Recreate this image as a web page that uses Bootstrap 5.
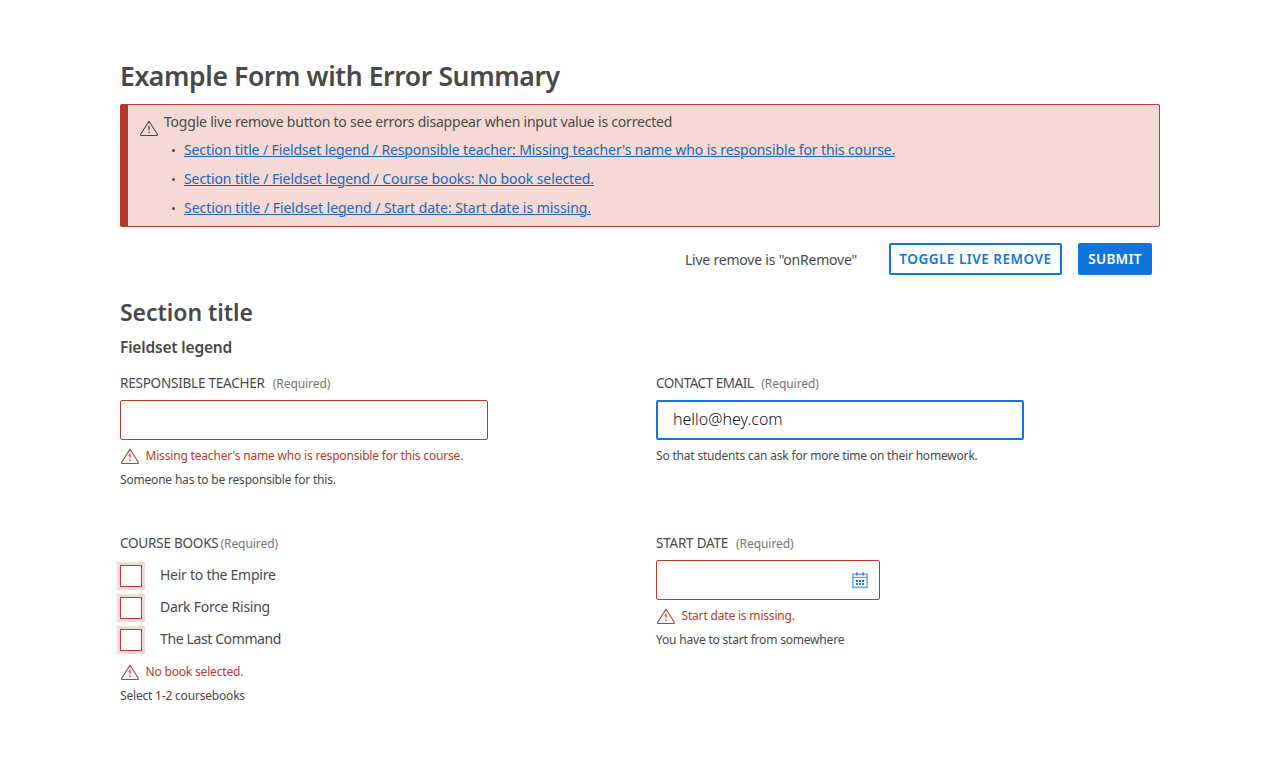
<!DOCTYPE html>
<html lang="en">
<head>
<meta charset="utf-8">
<meta name="viewport" content="width=device-width, initial-scale=1">
<title>Example Form with Error Summary</title>
<link href="https://cdn.jsdelivr.net/npm/bootstrap@5.3.0/dist/css/bootstrap.min.css" rel="stylesheet">
<style>
:root { --ink: #484848; --danger: #b7392c; --danger-bg: #f5d9d5; --action: #1175dd; }
body { font-family: "Noto Sans", sans-serif; font-size: 14px; line-height: 20px; color: var(--ink); background: #fff; }
.page { width: 1040px; min-height: 760px; margin: 0 auto; padding-top: 56px; }
h1 { font-size: 26.5px; line-height: 40px; font-weight: 600; letter-spacing: -.38px; margin: 0 0 8px; }
h2 { font-size: 23px; line-height: 32px; font-weight: 600; letter-spacing: -.04px; margin: 0; }
legend { font-size: 15.5px; line-height: 24px; font-weight: 600; letter-spacing: -.18px; margin: 7px 0 0; }
.summary { height: 123px; border: 1px solid var(--danger); border-left-width: 8px; border-radius: 2px; background: var(--danger-bg); padding: 7px 10.5px; }
.summary > svg { margin-top: 6px; }
.summary-body { padding-left: 5.5px; }
.summary p { letter-spacing: -.21px; margin: 0 0 8px; }
.summary li { display: flex; align-items: center; height: 20px; margin-bottom: 9px; padding-left: 8px; }
.summary li::before { content: ""; width: 3px; height: 3px; border-radius: 50%; background: var(--ink); margin-right: 9px; }
.summary a { color: #2065b8; text-decoration: underline; text-decoration-thickness: 1px; text-underline-offset: 1px; letter-spacing: -.095px; }
.summary li:first-child a { letter-spacing: -.12px; }
.summary li:last-child a { letter-spacing: -.047px; }
.actions { margin-top: 16px; padding-right: 8px; gap: 16px; }
.actions > span { letter-spacing: -.21px; margin: 2px 16px 0 0; }
.actions .btn { height: 32px; padding: 0; border: 2px solid var(--action); border-radius: 2px; font-size: 13.5px; line-height: 28px; font-weight: 600; color: var(--action); letter-spacing: .5px; }
.actions .btn-toggle { width: 173px; }
.actions .btn-submit { width: 74px; background: var(--action); color: #fff; letter-spacing: .28px; }
.form-section { padding-top: 21px; }
.field { height: 160px; }
.field-tall { height: 190px; }
.caption { display: flex; align-items: center; height: 24px; margin-bottom: 5px; font-size: 13.5px; letter-spacing: -.22px; white-space: pre; }
.caption small { font-size: 12px; color: #757575; letter-spacing: -.07px; margin-left: 8px; padding-top: 1px; }
.caption .near { margin-left: 2px; }
.tight { letter-spacing: -.48px; }
.control { width: 368px; height: 40px; padding: 0 16px; border: 1px solid var(--danger); border-radius: 2px; outline: 0; font-size: 16px; font-weight: 300; color: #111; }
.control.active { border: 2px solid var(--action); padding: 0 15px 2px; }
.date { width: 224px; padding-right: 10px; }
.note { display: flex; align-items: center; height: 24px; font-size: 12px; line-height: 24px; letter-spacing: -.19px; white-space: nowrap; }
.note.bad { color: var(--danger); letter-spacing: -.18px; }
.note svg { margin: 0 5.5px 0 0; }
.control + .note { margin-top: 4px; }
.options + .note { margin-top: 5px; }
.option { display: flex; align-items: center; height: 32px; gap: 18px; letter-spacing: -.26px; }
.option:last-child { letter-spacing: -.38px; }
.option .box { width: 22px; height: 22px; border: 1px solid var(--danger); box-shadow: 0 0 0 3px var(--danger-bg); margin-top: 1px; }
</style>
</head>
<body>
<svg class="d-none">
  <symbol id="warn" viewBox="0 0 20 20">
    <path d="M10 3.2 1.6 16.3q-.3 1.1.8 1.2h15.2q1.1-.1.8-1.2L10 3.2Z" fill="none" stroke="currentColor" stroke-width="1.05" stroke-linejoin="round"/>
    <path d="M9.2 8h1.6l-.3 4.4h-1zM9.3 13.7h1.4V15H9.3z" fill="currentColor"/>
  </symbol>
</svg>
<main class="page">
  <h1>Example Form with Error Summary</h1>
  <div class="summary d-flex">
    <svg width="20" height="20" class="flex-shrink-0"><use href="#warn"/></svg>
    <div class="summary-body">
      <p>Toggle live remove button to see errors disappear when input value is corrected</p>
      <ul class="list-unstyled m-0">
        <li><a href="#teacher">Section title / Fieldset legend / Responsible teacher: Missing teacher's name who is responsible for this course.</a></li>
        <li><a href="#books">Section title / Fieldset legend / Course books: No book selected.</a></li>
        <li><a href="#start">Section title / Fieldset legend / Start date: Start date is missing.</a></li>
      </ul>
    </div>
  </div>
  <div class="actions d-flex justify-content-end align-items-center">
    <span>Live remove is "onRemove"</span>
    <button type="button" class="btn btn-toggle">TOGGLE LIVE REMOVE</button>
    <button type="button" class="btn btn-submit">SUBMIT</button>
  </div>
  <section class="form-section">
    <h2>Section title</h2>
    <fieldset>
      <legend>Fieldset legend</legend>
      <div class="row" style="--bs-gutter-x:32px">
        <div class="col-6 field pt-2 mt-1">
          <label class="caption" for="teacher">RESPONSIBLE TEACHER<small>(Required)</small></label>
          <input id="teacher" class="control d-block">
          <div class="note bad"><svg width="20" height="20"><use href="#warn"/></svg>Missing teacher's name who is responsible for this course.</div>
          <div class="note">Someone has to be responsible for this.</div>
        </div>
        <div class="col-6 field pt-2 mt-1">
          <label class="caption" for="email"><span class="tight">CONTACT EMAIL</span><small>(Required)</small></label>
          <input id="email" class="control active d-block" value="hello@hey.com">
          <div class="note">So that students can ask for more time on their homework.</div>
        </div>
        <div class="col-6 field-tall pt-2" id="books">
          <div class="caption mb-0">COURSE BOOKS<small class="near">(Required)</small></div>
          <div class="options pt-1">
            <label class="option"><span class="box"></span>Heir to the Empire</label>
            <label class="option"><span class="box"></span>Dark Force Rising</label>
            <label class="option"><span class="box"></span>The Last Command</label>
          </div>
          <div class="note bad"><svg width="20" height="20"><use href="#warn"/></svg>No book selected.</div>
          <div class="note">Select 1-2 coursebooks</div>
        </div>
        <div class="col-6 field-tall pt-2">
          <div class="caption">START DATE<small>(Required)</small></div>
          <div class="control date d-flex align-items-center justify-content-end" id="start">
            <svg width="18" height="18" viewBox="0 0 18 18" fill="none" stroke="#1175dd">
              <path d="M1.9 3.2h14.2v13.2H1.9z" stroke-width="1.6" opacity=".6"/>
              <path d="M2 6.4h14" opacity=".8"/>
              <path d="M5.9 1.5v3M12.1 1.5v3" stroke-width="1.4"/>
              <path d="M4.9 10h2M8 10h2M11.1 10h2M4.9 13h2M8 13h2M11.1 13h2" stroke-width="2"/>
            </svg>
          </div>
          <div class="note bad"><svg width="20" height="20"><use href="#warn"/></svg>Start date is missing.</div>
          <div class="note">You have to start from somewhere</div>
        </div>
      </div>
    </fieldset>
  </section>
</main>
<script src="https://cdn.jsdelivr.net/npm/bootstrap@5.3.0/dist/js/bootstrap.bundle.min.js"></script>
</body>
</html>
